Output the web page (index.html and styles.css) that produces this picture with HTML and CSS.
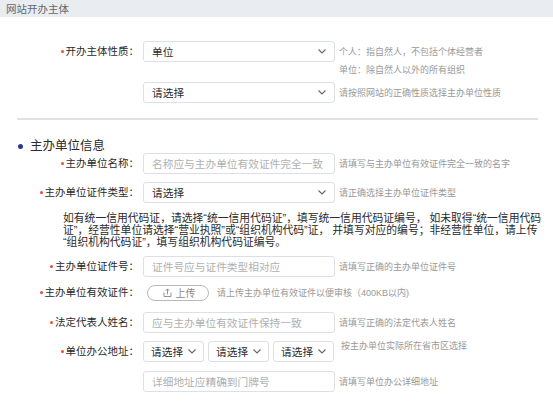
FILE: index.html
```html
<!DOCTYPE html>
<html lang="zh-CN">
<head>
<meta charset="utf-8">
<link rel="stylesheet" href="styles.css">
</head>
<body>
<div class="hdr">网站开办主体</div>

<div class="sec1">
  <div class="row r1">
    <div class="label"><span class="req"></span>开办主体性质：</div>
    <div class="box sel"><span class="val">单位</span><svg class="chev" width="8" height="5" viewBox="0 0 8 5"><path d="M0.5 0.5L4 4L7.5 0.5" fill="none" stroke="#666" stroke-width="1.1"/></svg></div>
    <div class="hint two">个人：指自然人，不包括个体经营者<br>单位：除自然人以外的所有组织</div>
  </div>
  <div class="row r2">
    <div class="label"></div>
    <div class="box sel"><span class="val">请选择</span><svg class="chev" width="8" height="5" viewBox="0 0 8 5"><path d="M0.5 0.5L4 4L7.5 0.5" fill="none" stroke="#666" stroke-width="1.1"/></svg></div>
    <div class="hint">请按照网站的正确性质选择主办单位性质</div>
  </div>
</div>

<div class="divider"></div>

<div class="heading"><span class="dot"></span>主办单位信息</div>

<div class="row">
  <div class="label"><span class="req"></span>主办单位名称：</div>
  <div class="box"><span class="ph">名称应与主办单位有效证件完全一致</span></div>
  <div class="hint">请填写与主办单位有效证件完全一致的名字</div>
</div>
<div class="row g8">
  <div class="label"><span class="req"></span>主办单位证件类型：</div>
  <div class="box sel"><span class="val">请选择</span><svg class="chev" width="8" height="5" viewBox="0 0 8 5"><path d="M0.5 0.5L4 4L7.5 0.5" fill="none" stroke="#666" stroke-width="1.1"/></svg></div>
  <div class="hint">请正确选择主办单位证件类型</div>
</div>

<div class="para">如有统一信用代码证，请选择“统一信用代码证”，填写统一信用代码证编号， 如未取得“统一信用代码<br>证”，经营性单位请选择“营业执照”或“组织机构代码”证， 并填写对应的编号；非经营性单位，请上传<br>“组织机构代码证”，填写组织机构代码证编号。</div>

<div class="row g8">
  <div class="label"><span class="req"></span>主办单位证件号：</div>
  <div class="box"><span class="ph">证件号应与证件类型相对应</span></div>
  <div class="hint">请填写正确的主办单位证件号</div>
</div>
<div class="row up">
  <div class="label"><span class="req"></span>主办单位有效证件：</div>
  <div class="upbtn"><svg width="9" height="9" viewBox="0 0 9 9"><path d="M1 4.5V8.5H8V4.5" fill="none" stroke="#888" stroke-width="0.9"/><path d="M4.5 6.5V1M2.6 2.8L4.5 0.9L6.4 2.8" fill="none" stroke="#888" stroke-width="0.9"/></svg><span>上传</span></div>
  <div class="hint uph">请上传主办单位有效证件以便审核（400KB以内)</div>
</div>
<div class="row g9">
  <div class="label"><span class="req"></span>法定代表人姓名：</div>
  <div class="box"><span class="ph">应与主办单位有效证件保持一致</span></div>
  <div class="hint">请填写正确的法定代表人姓名</div>
</div>
<div class="row g8">
  <div class="label"><span class="req"></span>单位办公地址：</div>
  <div class="triple">
    <div class="box sel small"><span class="val">请选择</span><svg class="chev" width="8" height="5" viewBox="0 0 8 5"><path d="M0.5 0.5L4 4L7.5 0.5" fill="none" stroke="#666" stroke-width="1.1"/></svg></div>
    <div class="box sel small"><span class="val">请选择</span><svg class="chev" width="8" height="5" viewBox="0 0 8 5"><path d="M0.5 0.5L4 4L7.5 0.5" fill="none" stroke="#666" stroke-width="1.1"/></svg></div>
    <div class="box sel small"><span class="val">请选择</span><svg class="chev" width="8" height="5" viewBox="0 0 8 5"><path d="M0.5 0.5L4 4L7.5 0.5" fill="none" stroke="#666" stroke-width="1.1"/></svg></div>
  </div>
  <div class="hint top">按主办单位实际所在省市区选择</div>
</div>
<div class="row g9">
  <div class="label"></div>
  <div class="box"><span class="ph">详细地址应精确到门牌号</span></div>
  <div class="hint">请填写单位办公详细地址</div>
</div>
</body>
</html>
```
FILE: styles.css
```css
html, body {
  margin: 0;
  padding: 0;
  background: #fff;
}
body {
  width: 553px;
  height: 405px;
  overflow: hidden;
  font-family: "Liberation Sans", "Noto Sans CJK SC", sans-serif;
  color: #333;
}
.hdr {
  height: 17px;
  line-height: 19px;
  background: #e9edf1;
  color: #666;
  font-size: 10.5px;
  padding-left: 6px;
}
.sec1 {
  padding-top: 24px;
}
.row {
  display: flex;
  align-items: center;
}
.r1 {
  align-items: flex-start;
  height: 38px;
  margin-bottom: 3px;
}
.label {
  flex: none;
  width: 143px;
  box-sizing: border-box;
  padding-right: 4px;
  text-align: right;
  font-size: 10.5px;
  color: #2a2a2a;
  line-height: 21px;
  white-space: nowrap;
}
.req {
  display: inline-block;
  width: 3px;
  height: 3px;
  border-radius: 50%;
  background: #f0493a;
  vertical-align: middle;
  margin-right: 2px;
  position: relative;
  top: -1px;
}
.box {
  flex: none;
  width: 192px;
  height: 21px;
  box-sizing: border-box;
  border: 1px solid #dcdfe6;
  border-radius: 3px;
  background: #fff;
  display: flex;
  align-items: center;
  padding: 0 8px;
  font-size: 10.7px;
  white-space: nowrap;
  overflow: hidden;
}
.sel {
  justify-content: space-between;
}
.val { color: #2a2a2a; }
.ph { color: #b0b0b0; }
.chev { flex: none; }
.hint {
  margin-left: 4px;
  font-size: 9px;
  color: #999;
  white-space: nowrap;
}
.hint.two {
  line-height: 18px;
  margin-top: 2px;
}
.divider {
  height: 2px;
  background: #dde2e6;
  margin: 15px 15px 0 17px;
}
.heading {
  margin-top: 19px;
  height: 14px;
  line-height: 14px;
  font-size: 12.5px;
  color: #2a2a2a;
  padding-left: 18px;
  display: flex;
  align-items: center;
}
.dot {
  width: 5px;
  height: 5px;
  border-radius: 50%;
  background: #2b3a8c;
  margin-right: 7px;
}
.g8 { margin-top: 8px; }
.g9 { margin-top: 9px; }
.para {
  margin-top: 9px;
  padding-left: 63px;
  font-size: 10.8px;
  line-height: 12px;
  color: #2a2a2a;
  white-space: nowrap;
}
.up {
  margin-top: 5px;
  height: 21px;
}
.upbtn {
  margin-left: 4px;
  width: 62px;
  height: 16px;
  box-sizing: border-box;
  border: 1px solid #b8b8b8;
  border-radius: 8px;
  display: flex;
  align-items: center;
  justify-content: center;
  gap: 4px;
  font-size: 10px;
  color: #888;
}
.upbtn svg { margin-left: 2px; }
.uph { margin-left: 8px; }
.triple {
  display: flex;
  gap: 4px;
}
.box.small {
  width: 61px;
  padding: 0 7px;
}
.hint.top {
  margin-left: 7px;
  align-self: flex-start;
  margin-top: -2px;
}
```
